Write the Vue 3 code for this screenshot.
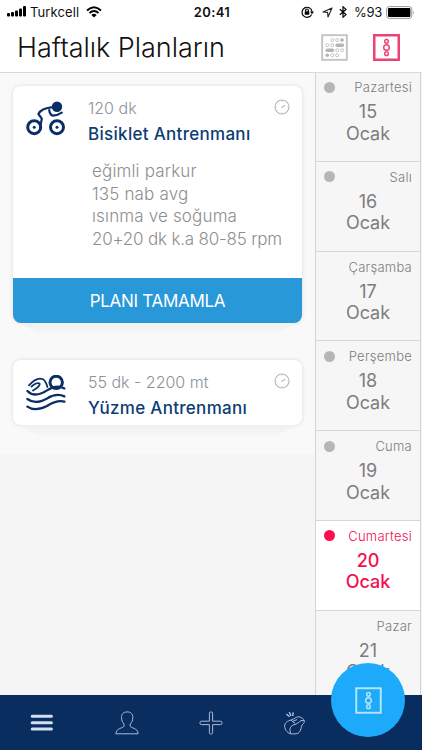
<template>
  <div class="screen">
    <div class="statusbar">
      <div class="status-left">
        <svg class="signal" width="20" height="12" viewBox="0 0 20 12">
          <rect x="0" y="8" width="3" height="3.5" rx="1" />
          <rect x="4" y="7" width="3" height="4.5" rx="1" />
          <rect x="8" y="5.5" width="3" height="6" rx="1" />
          <rect x="12" y="3.5" width="3" height="8" rx="1" />
          <rect x="16" y="1" width="3" height="10.5" rx="1" />
        </svg>
        <span class="carrier">Turkcell</span>
        <svg class="wifi" width="16" height="12" viewBox="0 0 16 12">
          <path d="M1 4.4 Q8 -2 15 4.4" />
          <path d="M3.5 7 Q8 2.9 12.5 7" />
          <path class="solid" d="M8 11.4 L5.4 8.9 Q8 6.7 10.6 8.9 Z" />
        </svg>
      </div>
      <span class="clock">20:41</span>
      <div class="status-right">
        <svg class="lock" width="13" height="12" viewBox="0 0 13 12">
          <path d="M10.6 8.4 A5 5 0 1 1 11 5.5" />
          <path class="solid" d="M9 5.4 h4 l-2 2.8z" />
          <rect class="solid" x="3.7" y="5.3" width="4.6" height="3.4" rx=".4" />
          <path d="M4.6 5.5 V4.4 a1.4 1.4 0 0 1 2.8 0 V5.5" />
        </svg>
        <svg class="arrow" width="11" height="11" viewBox="0 0 11 11"><path d="M10 1 L1 5 L5.6 5.4 L6 10 Z" /></svg>
        <svg class="bluetooth" width="8" height="12" viewBox="0 0 8 12"><path d="M.8 3.3 L7 8.6 L4 11.2 V.8 L7 3.4 L.8 8.7" /></svg>
        <span class="percent">%93</span>
        <svg class="battery" width="29" height="13" viewBox="0 0 29 13">
          <rect class="shell" x=".6" y=".6" width="25.2" height="11.8" rx="2.6" />
          <rect x="2" y="2" width="22.4" height="9" rx="1" />
          <path class="tip" d="M27 4.4 q1.6 2.1 0 4.2z" />
        </svg>
      </div>
    </div>

    <header class="header">
      <h1>Haftalık Planların</h1>
      <div class="views">
        <svg class="month-icon" width="27" height="27" viewBox="0 0 28 28">
          <rect class="frame" x="1.2" y="1.2" width="25.6" height="25.6" />
          <g class="ring">
            <circle cx="11.7" cy="6.3" r="1.6" />
            <circle cx="16.7" cy="6.3" r="1.6" />
            <circle cx="6.5" cy="11.6" r="1.6" />
            <circle cx="11.7" cy="11.6" r="1.6" />
            <circle cx="16.9" cy="16.8" r="1.6" />
            <circle cx="22" cy="16.8" r="1.6" />
            <circle cx="11.7" cy="22" r="1.6" />
            <circle cx="16.7" cy="22" r="1.6" />
          </g>
          <g class="dot">
            <circle cx="21.8" cy="6.3" r="1.9" />
            <rect x="15" y="9.8" width="9" height="3.6" rx="1.8" />
            <rect x="4.6" y="15" width="9" height="3.6" rx="1.8" />
            <circle cx="6.5" cy="22" r="1.9" />
          </g>
        </svg>
        <svg class="day-icon" width="27" height="27" viewBox="0 0 28 28">
          <rect class="frame" x="1.3" y="1.3" width="25.4" height="25.4" />
          <circle cx="14" cy="7.6" r="1.9" />
          <circle cx="14" cy="14" r="2.9" />
          <circle cx="14" cy="20.4" r="1.9" />
        </svg>
      </div>
    </header>

    <main class="content">
      <section class="plans">
        <div class="plan-list">
          <article v-for="plan in plans" :key="plan.title" class="card" :class="{ open: plan.notes }">
            <div class="card-body">
              <svg v-if="plan.type === 'bike'" class="sport" width="42" height="36" viewBox="0 0 42 36">
                <g class="line">
                  <circle cx="9.2" cy="26.2" r="6.5" />
                  <circle cx="32" cy="26.2" r="6.5" />
                  <path class="thin" d="M28 6.2 C20 7 15.5 8.5 13.4 13 L16.8 17.6 L15.2 26" />
                  <path class="thin" d="M24.2 9 C24.6 12 25.6 14.2 28 14.6 Q32 14.6 36.8 11.6" />
                </g>
                <circle class="solid" cx="32" cy="5.8" r="5.2" />
                <circle class="solid" cx="9.2" cy="26.2" r="1.5" />
                <circle class="solid" cx="32" cy="26.2" r="1.5" />
              </svg>
              <svg v-else class="sport" width="42" height="36" viewBox="0 0 42 36">
                <g class="line">
                  <circle cx="31.2" cy="7.4" r="6.2" />
                  <path class="arm" d="M4 10.4 C9 4.6 14 2.4 18 4.2 C20.6 5.4 21.2 8.2 22.4 12" />
                  <path class="arm" d="M6.5 11.6 C9.5 8.6 13 7.4 14.4 8.4 C15.6 9.8 13 12.6 8 15.6" />
                  <path class="wave" d="M2.4 16 C8 21.8 15 19.8 22 15.4 C28 11.6 34 10.6 39.4 13.4" />
                  <path class="wave" d="M2.4 24 C9 29 15.6 27 22 23.4 C28 19.8 34 18.8 39.4 21.4" />
                  <path class="wave" d="M2.4 31.6 C9 36.2 15.6 34.2 22 31 C28 27.2 33 25 39.4 26.6" />
                </g>
              </svg>
              <div class="card-text">
                <p class="meta">{{ plan.meta }}</p>
                <h2>{{ plan.title }}</h2>
                <ul v-if="plan.notes" class="notes">
                  <li v-for="note in plan.notes" :key="note">{{ note }}</li>
                </ul>
              </div>
              <svg class="timer" width="16" height="16" viewBox="0 0 16 16">
                <circle cx="8" cy="8" r="7" />
                <path d="M7.4 8.4 L11.2 6.2 M8 1.2 V2.4 M8 13.6 V14.8 M1.2 8 H2.4 M13.6 8 H14.8" />
              </svg>
            </div>
            <button v-if="plan.notes" class="complete">PLANI TAMAMLA</button>
          </article>
        </div>
      </section>

      <aside class="days">
        <div v-for="day in days" :key="day.date" class="day" :class="{ active: day.date === selected }">
          <div class="day-head">
            <i v-if="day.planned" class="bullet"></i>
            <span class="day-name">{{ day.name }}</span>
          </div>
          <div class="date">{{ day.date }}<br />Ocak</div>
        </div>
      </aside>
    </main>

    <nav class="tabbar">
      <a class="tab">
        <svg width="24" height="24" viewBox="0 0 24 24" class="menu">
          <path d="M2.2 5.3 H21.4 M2.2 11.8 H21.4 M2.2 18.1 H21.4" />
        </svg>
      </a>
      <a class="tab">
        <svg width="24" height="24" viewBox="0 0 24 24">
          <path d="M12.2 .9 C8.4 .9 6.3 3.2 6.5 6.7 C6.6 9.5 7.5 11.6 9 13 V15.2 C8.5 17.2 1 16.8 .9 22.8 H23.1 C23 16.8 15.6 17.2 15.2 15.2 V13 C16.8 11.6 17.7 9.5 17.8 6.7 C18 3.2 16 .9 12.2 .9 Z" />
        </svg>
      </a>
      <a class="tab">
        <svg width="24" height="24" viewBox="0 0 24 24">
          <path d="M11.5 1 H12.5 Q13.6 1 13.6 2.2 V10.2 H21.6 Q23 10.2 23 11.4 V12.4 Q23 13.6 21.6 13.6 H13.6 V21.6 Q13.6 23 12.5 23 H11.5 Q10.4 23 10.4 21.6 V13.6 H2.4 Q1 13.6 1 12.4 V11.4 Q1 10.2 2.4 10.2 H10.4 V2.2 Q10.4 1 11.5 1 Z" />
        </svg>
      </a>
      <a class="tab">
        <svg width="24" height="24" viewBox="0 0 24 24">
          <path d="M3.3 3 L6.6 5.8 M6.3 1 L7.9 5 M10.2 1.4 L9.7 5" class="bold" />
          <path d="M1.6 15.5 C1.4 11.5 5 9.8 8 9 C12 7.8 12.8 5.8 15.5 5.8 C18 5.8 21.4 8.2 21.4 10.2 C21.4 12.2 19.4 13 18.6 15.2 C17.6 18.6 17.3 22.9 12 22.9 H8.2 C5 22.6 1.9 19 1.6 15.5 Z" />
          <path d="M7.8 22.6 C5.8 18 7.5 14.4 12 13.4 C14.6 12.8 15.8 11 18 9.6 L21 9.6 M8 9 L12 12.4 M9.5 10.5 L14 8.6" />
        </svg>
      </a>
      <span class="tab"></span>
      <button class="fab">
        <svg class="day-icon" width="27" height="27" viewBox="0 0 28 28">
          <rect class="frame" x="1.3" y="1.3" width="25.4" height="25.4" />
          <circle cx="14" cy="7.6" r="1.9" />
          <circle cx="14" cy="14" r="2.9" />
          <circle cx="14" cy="20.4" r="1.9" />
        </svg>
      </button>
    </nav>
  </div>
</template>

<script setup>
import { ref } from 'vue'

const selected = ref(20)

const plans = [
  {
    type: 'bike',
    meta: '120 dk',
    title: 'Bisiklet Antrenmanı',
    notes: ['eğimli parkur', '135 nab avg', 'ısınma ve soğuma', '20+20 dk k.a 80-85 rpm']
  },
  { type: 'swim', meta: '55 dk - 2200 mt', title: 'Yüzme Antrenmanı' }
]

const days = [
  { name: 'Pazartesi', date: 15, planned: true },
  { name: 'Salı', date: 16, planned: true },
  { name: 'Çarşamba', date: 17, planned: false },
  { name: 'Perşembe', date: 18, planned: true },
  { name: 'Cuma', date: 19, planned: true },
  { name: 'Cumartesi', date: 20, planned: true },
  { name: 'Pazar', date: 21, planned: false }
]
</script>

<style>
body { background: #f5f5f5; overflow: hidden }
</style>

<style scoped>
* { box-sizing: border-box }
.screen { width: 422px; height: 750px; display: flex; flex-direction: column; overflow: hidden; background: #f5f5f5; font-family: Inter, Roboto, "Liberation Sans", sans-serif; color: #111 }
svg { display: block; flex: none; fill: none }
h1, h2, p, ul { margin: 0; padding: 0; list-style: none }
button { border: 0; padding: 0; font-family: inherit }

.statusbar { height: 24px; flex: none; display: grid; grid-template-columns: 1fr auto 1fr; align-items: center; padding: 0 7px; background: #fff; font-size: 13px; line-height: 24px }
.status-left, .status-right { display: flex; align-items: center }
.status-right { justify-content: flex-end }
.signal { fill: #000; margin-top: -2px }
.carrier { margin-left: 3px; letter-spacing: .1px }
.wifi { margin: -1px 0 0 7px; stroke: #000; stroke-width: 2 }
.solid { fill: #000; stroke: none }
.clock { font-weight: 600; letter-spacing: .4px; padding-left: 2px }
.lock { stroke: #000; stroke-width: 1.2 }
.arrow { margin-left: 8px; stroke: #222; stroke-width: 1.1; stroke-linejoin: round }
.bluetooth { margin-left: 6px; stroke: #000; stroke-width: 1.2 }
.percent { margin-left: 7px; letter-spacing: -.3px }
.battery { margin-left: 4px; fill: #000 }
.shell { fill: none; stroke: #999; stroke-width: 1 }
.tip { fill: #999 }

.header { height: 49px; flex: none; display: flex; align-items: center; justify-content: space-between; padding: 0 22px 0 17px; background: #fff; border-bottom: 1px solid #d9d9d9 }
h1 { font-size: 27px; font-weight: 300; letter-spacing: -.02px; line-height: 40px }
.views { display: flex; gap: 25px; margin-top: -1px }
.month-icon { stroke: #c4c4c4; stroke-width: 1 }
.month-icon .frame { stroke-width: 2 }
.month-icon .dot { fill: #b4b4b4; stroke: none }
.day-icon { stroke: #ee4372; stroke-width: 1.5 }
.day-icon .frame { stroke-width: 2.6 }

.content { flex: 1; min-height: 0; display: flex }
.plans { width: 315px; flex: none }
.plan-list { height: 381px; padding: 13px; display: flex; flex-direction: column; gap: 37px; background: #f9f9f9 }
.card { width: 289px; height: 65px; position: relative; display: flex; flex-direction: column; border-radius: 8px; background: #fff; box-shadow: 0 0 4px rgba(0, 0, 0, .13) }
.card.open { height: 237px }
/* folded-paper shade under each card */
.card::after { content: ""; position: absolute; left: 0; right: 0; top: 100%; height: 11px; background: linear-gradient(#f0f0f0, #f7f7f7); clip-path: polygon(2% 0, 98% 0, 91% 100%, 9% 100%) }
.card-body { flex: 1; display: flex; padding: 13px 12px 0 12px }
.sport { margin-top: 2px }
.sport .line { stroke: #0a2f66; stroke-width: 3; stroke-linecap: round; stroke-linejoin: round }
.sport .thin { stroke-width: 2.2 }
.sport .arm { stroke-width: 1.8 }
.sport .wave { stroke-width: 2.3 }
.sport .solid { fill: #0a2f66 }
.card-text { flex: 1; min-width: 0; padding-left: 21px; white-space: nowrap }
.meta { font-size: 16px; line-height: 20px; margin-top: -1px; font-weight: 300; color: #8d9199; letter-spacing: 0 }
h2 { font-size: 17px; line-height: 22px; margin-top: 5px; font-weight: 500; color: #0d3c74; letter-spacing: .3px }
.notes { margin: 15px 0 0 4px; font-size: 17px; line-height: 22.7px; font-weight: 300; color: #8e8e8e; letter-spacing: .15px }
.notes li:last-child { letter-spacing: -.2px }
.timer { stroke: #b9b9b9; stroke-width: 1.1 }
.complete { height: 45px; padding-top: 1px; border-radius: 0 0 8px 8px; background: #2898d9; color: #fff; font-size: 17px; letter-spacing: -.3px }

.days { width: 106px; flex: none; height: 622px; overflow: hidden; border-left: 1px solid #d4d4d4; border-right: 1px solid #d4d4d4; background: #f6f6f6 }
.day { height: 89.75px; border-bottom: 1px solid #d6d6d6; padding: 5px 8px 0 8px; color: #7d7d7d }
.day:first-child { margin-top: -1px }
.day-head { height: 20px; display: flex; align-items: center }
.bullet { width: 11px; height: 11px; border-radius: 50%; background: #b6b6b6 }
.day-name { margin-left: auto; font-size: 13px; font-weight: 300; letter-spacing: .25px }
.date { margin-top: 4px; font-size: 18px; line-height: 21.5px; text-align: center }
.active { background: #fff; color: #f20f50 }
.active .bullet { background: #fb0f50 }
.active .date { font-weight: 500 }

.tabbar { height: 55px; flex: none; position: relative; z-index: 1; display: grid; grid-template-columns: repeat(5, 1fr); background: #0a2d60 }
.tab { display: grid; place-items: center; stroke: #a9bbdc; stroke-width: 1 }
.menu { stroke: #d3def3; stroke-width: 3; stroke-linecap: round }
.bold { stroke-width: 1.5 }
.fab { position: absolute; left: 331px; top: -32px; width: 74px; height: 74px; border-radius: 50%; background: #1eaafa; display: grid; place-items: center }
.fab .day-icon { stroke: #b5e6fb }
.fab .frame { stroke-width: 2 }
</style>
